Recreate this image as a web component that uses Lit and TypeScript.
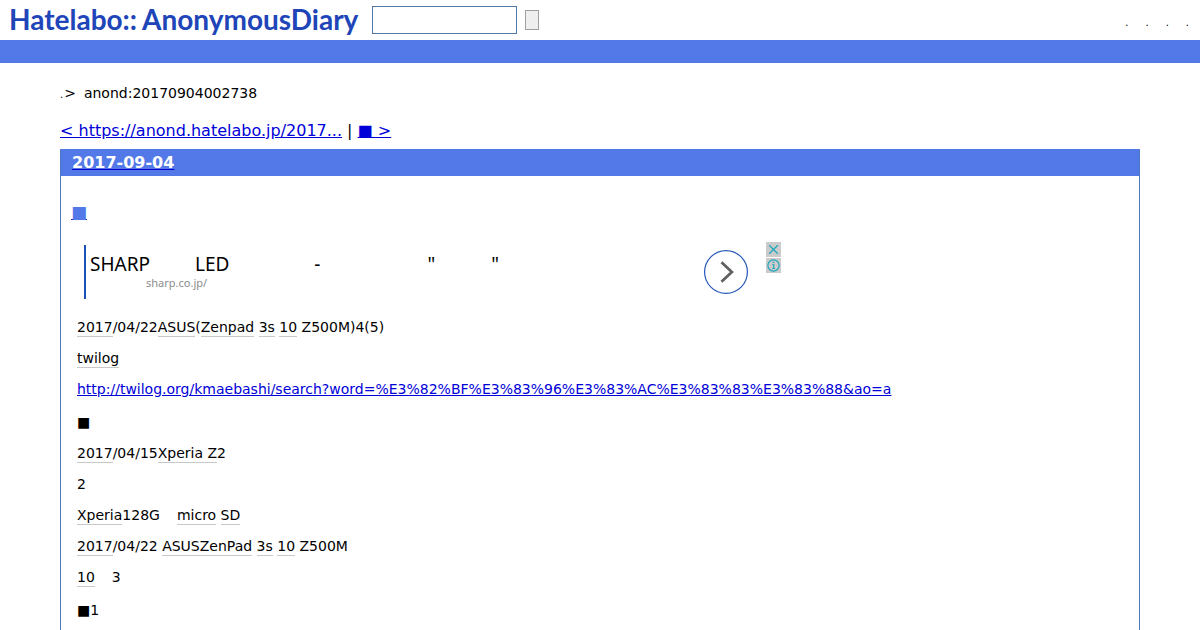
import { LitElement, html, css } from "lit";
import { customElement } from "lit/decorators.js";

@customElement("ad-banner")
class AdBanner extends LitElement {
  static styles = css`
    :host { display: flex; align-items: flex-start; justify-content: space-between; box-sizing: border-box; max-width: 697px; font-family: "Noto Sans", sans-serif; }
    .copy { border-left: 2px solid #1a53b8; padding: 8px 0 0 4px; height: 46px; margin-top: 3px; }
    .title { display: flex; font-size: 19px; line-height: 22px; color: #000; text-decoration: none; white-space: pre; }
    .led { margin-left: 45px; }
    .dash { margin-left: 85px; }
    .open { margin-left: 107px; }
    .close { margin-left: 56px; }
    .site { display: block; margin-left: 56px; font-size: 11px; line-height: 16px; color: #8c8c8c; text-decoration: none; }
    .right { display: flex; gap: 17px; }
    .go { margin-top: 7px; width: 46px; height: 46px; display: block; }
    .tools { display: flex; flex-direction: column; gap: 1px; }
    button { border: 0; padding: 0; width: 15px; height: 15px; background: #cbcbcb; display: block; }
    svg { display: block; }
  `;
  render() {
    return html`
      <div class="copy">
        <a class="title" href="#"><span>SHARP</span><span class="led">LED</span><span class="dash">-</span><span class="open">"</span><span class="close">"</span></a>
        <a class="site" href="#">sharp.co.jp/</a>
      </div>
      <div class="right">
        <a class="go" href="#" aria-label="Open"><svg width="46" height="46" viewBox="0 0 46 46" fill="none">
          <circle cx="23" cy="23" r="21.4" stroke="#2457b8" stroke-width="1.2"/>
          <path d="M18.5 13.3 28.8 23 18.5 32.7" stroke="#616161" stroke-width="2.8"/>
        </svg></a>
        <div class="tools">
          <button aria-label="Close"><svg width="15" height="15" fill="none" stroke="#20a8bd" stroke-width="1.3"><path d="M3.2 3.2 11.8 11.8M11.8 3.2 3.2 11.8"/></svg></button>
          <button aria-label="Info"><svg width="15" height="15" fill="none" stroke="#20a8bd"><circle cx="7.5" cy="7.5" r="5.6" stroke-width="1.2"/><path d="M6.3 6.5h1.4v4M6.2 10.5h2.8M6.7 4.3h1.5" stroke-width="1.2"/></svg></button>
        </div>
      </div>`;
  }
}

@customElement("app-root")
class AppRoot extends LitElement {
  static styles = css`
    :host { display: block; height: 100vh; overflow: hidden; background: #fff; color: #000; font-family: "DejaVu Sans", sans-serif; font-size: 14px; line-height: 17px; }
    a { color: #0000d8; }
    header { display: flex; align-items: center; height: 40px; padding: 0 11px 0 9px; box-sizing: border-box; }
    .logo { display: flex; gap: 5px; width: 363px; flex: none; color: #2045b8; text-decoration: none; font: 700 28px/34px Lato, sans-serif; padding-bottom: 2px; white-space: nowrap; }
    form { display: flex; align-items: center; gap: 8px; }
    .query { box-sizing: border-box; width: 145px; height: 28px; border: 1px solid #5279a8; padding: 2px 4px; background: #fff; font: inherit; }
    .submit { box-sizing: border-box; width: 14px; height: 20px; border: 1px solid #a0a0a0; padding: 0; background: #efefef; }
    .menu { display: flex; gap: 17px; margin: 6px 0 0 auto; padding: 0; list-style: none; font-size: 10px; line-height: 12px; }
    .menu a { color: #000; text-decoration: none; }
    .bar { height: 23px; background: #5279e7; }
    main { padding: 0 60px; }
    .crumb { display: flex; padding-top: 22px; }
    .crumb a { color: #000; text-decoration: none; font-size: 10px; line-height: 20px; margin-right: 1px; }
    .crumb span { margin-right: 8px; }
    .pager { margin-top: 15px; font-size: 16px; line-height: 22px; }
    .day { margin-top: 7px; border: 1px solid #5279c0; border-top-color: #5279e7; }
    h2 { margin: 0; padding: 0 11px; background: #5279e7; font-size: 16px; line-height: 26px; }
    h2 a { color: #fff; text-decoration-color: #0000cd; }
    h3 { margin: 27px 10px 0; font-size: 16px; line-height: 19px; font-weight: 400; }
    h3 a { color: #5279e7; text-decoration-color: #2222cc; }
    .square { font-size: 17px; }
    ad-banner { margin: 20px 16px 0 23px; }
    .body { padding: 0 16px; margin-top: 20px; }
    p { margin: 0 0 14px; }
    .mark { padding-top: 2px; }
    .kw { color: #000; text-decoration: none; border-bottom: 1px solid #c8c8c8; padding-bottom: 1px; }
    .gap { margin-left: 17px; }
  `;
  kw(text: string, cls = "") {
    return html`<a class="kw ${cls}" href="#">${text}</a>`;
  }
  render() {
    const k = (t: string, c = "") => this.kw(t, c);
    return html`
      <header>
        <a class="logo" href="#"><span>Hatelabo::</span><span>AnonymousDiary</span></a>
        <form>
          <input class="query" type="text" aria-label="Search">
          <button class="submit" type="button" aria-label="Search"></button>
        </form>
        <ul class="menu">${[1, 2, 3, 4].map(() => html`<li><a href="#">.</a></li>`)}</ul>
      </header>
      <div class="bar"></div>
      <main>
        <nav class="crumb"><a href="#">.</a><span>&gt;</span>anond:20170904002738</nav>
        <nav class="pager"><a href="#">&lt; https://anond.hatelabo.jp/2017...</a> | <a href="#">■ &gt;</a></nav>
        <article class="day">
          <h2><a href="#">2017-09-04</a></h2>
          <h3><a class="square" href="#">■</a></h3>
          <ad-banner></ad-banner>
          <div class="body">
            <p>${k("2017")}/04/22${k("ASUS")}(${k("Zenpad")} ${k("3s")} ${k("10")} Z500M)4(5)</p>
            <p>${k("twilog")}</p>
            <p><a href="#">http://twilog.org/kmaebashi/search?word=%E3%82%BF%E3%83%96%E3%83%AC%E3%83%83%E3%83%88&amp;ao=a</a></p>
            <p class="mark">■</p>
            <p>${k("2017")}/04/15${k("Xperia Z")}2</p>
            <p>2</p>
            <p>${k("Xperia")}128G${k("micro", "gap")} ${k("SD")}</p>
            <p>${k("2017")}/04/22 ${k("ASUSZenPad")} ${k("3s")} ${k("10")} Z500M</p>
            <p>${k("10")}<span class="gap">3</span></p>
            <p class="mark">■1</p>
          </div>
        </article>
      </main>`;
  }
}
